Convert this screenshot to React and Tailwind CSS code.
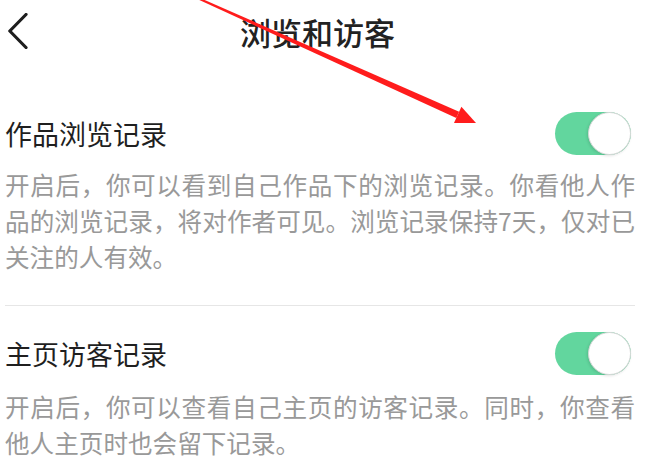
import React from "react";

function Toggle() {
  return (
    <div className="mr-[4px] flex h-[43px] w-[76px] shrink-0 items-center justify-end rounded-full bg-[#62d69e]">
      <div className="h-[43px] w-[43px] rounded-full border border-[#d8d8d8] bg-white shadow-[-1px_1px_3px_rgba(0,0,0,0.12)]" />
    </div>
  );
}

export default function App() {
  return (
    <div className="relative h-[457px] w-[650px] overflow-hidden bg-white font-['Noto_Sans_CJK_SC','Noto_Sans',sans-serif]">
      <header className="flex h-[62px] items-center pl-[8px]">
        <svg width="20" height="36" viewBox="0 0 20 36" className="shrink-0">
          <polyline points="18,1.5 1.8,18 18,34.5" fill="none" stroke="#1e1e1e" strokeWidth="3.2" strokeLinecap="round" strokeLinejoin="round" />
        </svg>
        <h1 className="ml-[212px] text-[31px] leading-none font-medium text-[#222]">浏览和访客</h1>
      </header>

      <div className="pl-[5px] pr-[15px]">
        <section className="pt-[50px]">
          <div className="flex h-[43px] items-center justify-between">
            <span className="text-[27px] leading-none text-[#1f1f1f]">作品浏览记录</span>
            <Toggle />
          </div>
          <p className="mt-[11px] text-justify text-[24.6px] leading-[36px] text-[#999]">
            开启后，你可以看到自己作品下的浏览记录。你看他人作品的浏览记录，将对作者可见。浏览记录保持7天，仅对已关注的人有效。
          </p>
        </section>

        <div className="mt-[31px] h-px bg-[#e6e6e6]" />

        <section className="pt-[26px]">
          <div className="flex h-[43px] items-center justify-between">
            <span className="text-[27px] leading-none text-[#1f1f1f]">主页访客记录</span>
            <Toggle />
          </div>
          <p className="mt-[13px] text-justify text-[24.6px] leading-[36px] text-[#999]">
            开启后，你可以查看自己主页的访客记录。同时，你查看他人主页时也会留下记录。
          </p>
        </section>
      </div>

      <svg className="pointer-events-none absolute left-0 top-0" width="650" height="457" viewBox="0 0 650 457">
        <polygon points="190.4,-4.1 191.2,-5.9 459.1,111.7 456.3,118.1" fill="#ff1c1c" />
        <polygon points="476,123 454.0,123.1 461.4,106.7" fill="#ff1c1c" />
      </svg>
    </div>
  );
}
